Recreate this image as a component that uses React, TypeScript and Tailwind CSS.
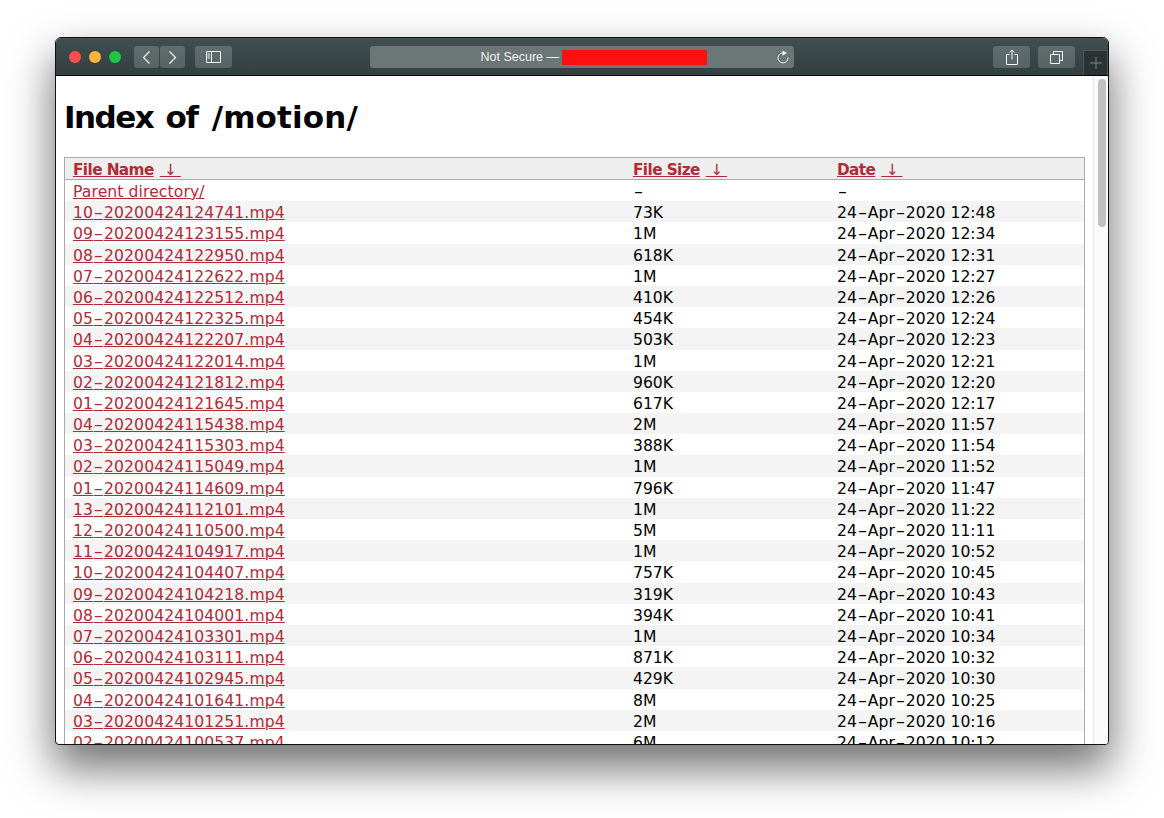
const rows: [string, string, string][] = [
  ["Parent directory/", "-", "-"],
  ["10-20200424124741.mp4", "73K", "24-Apr-2020 12:48"],
  ["09-20200424123155.mp4", "1M", "24-Apr-2020 12:34"],
  ["08-20200424122950.mp4", "618K", "24-Apr-2020 12:31"],
  ["07-20200424122622.mp4", "1M", "24-Apr-2020 12:27"],
  ["06-20200424122512.mp4", "410K", "24-Apr-2020 12:26"],
  ["05-20200424122325.mp4", "454K", "24-Apr-2020 12:24"],
  ["04-20200424122207.mp4", "503K", "24-Apr-2020 12:23"],
  ["03-20200424122014.mp4", "1M", "24-Apr-2020 12:21"],
  ["02-20200424121812.mp4", "960K", "24-Apr-2020 12:20"],
  ["01-20200424121645.mp4", "617K", "24-Apr-2020 12:17"],
  ["04-20200424115438.mp4", "2M", "24-Apr-2020 11:57"],
  ["03-20200424115303.mp4", "388K", "24-Apr-2020 11:54"],
  ["02-20200424115049.mp4", "1M", "24-Apr-2020 11:52"],
  ["01-20200424114609.mp4", "796K", "24-Apr-2020 11:47"],
  ["13-20200424112101.mp4", "1M", "24-Apr-2020 11:22"],
  ["12-20200424110500.mp4", "5M", "24-Apr-2020 11:11"],
  ["11-20200424104917.mp4", "1M", "24-Apr-2020 10:52"],
  ["10-20200424104407.mp4", "757K", "24-Apr-2020 10:45"],
  ["09-20200424104218.mp4", "319K", "24-Apr-2020 10:43"],
  ["08-20200424104001.mp4", "394K", "24-Apr-2020 10:41"],
  ["07-20200424103301.mp4", "1M", "24-Apr-2020 10:34"],
  ["06-20200424103111.mp4", "871K", "24-Apr-2020 10:32"],
  ["05-20200424102945.mp4", "429K", "24-Apr-2020 10:30"],
  ["04-20200424101641.mp4", "8M", "24-Apr-2020 10:25"],
  ["03-20200424101251.mp4", "2M", "24-Apr-2020 10:16"],
  ["02-20200424100537.mp4", "6M", "24-Apr-2020 10:12"],
];

const btn = "flex items-center justify-center h-[22px] rounded-[3px] bg-gradient-to-b from-[#5f6d6e] to-[#566465] text-[#f4f6f6]";
const link = "text-[#b02a37] underline";

function Wide({ text, under }: { text: string; under?: boolean }) {
  const parts = text.split("-");
  return (
    <>
      {parts.map((p, i) => (
        <span key={i}>
          {i > 0 && (
            <span className={`inline-block w-[11px] scale-x-[1.7] text-center ${under ? "underline" : ""}`}>-</span>
          )}
          {p}
        </span>
      ))}
    </>
  );
}

function Sort({ name }: { name: string }) {
  return (
    <>
      <a className={`${link} font-bold text-[15.3px] tracking-[-0.6px]`}>{name}</a>
      <a className={`${link} ml-[6px] whitespace-pre tracking-[-0.6px]`}>{" ↓ "}</a>
    </>
  );
}

export default function App() {
  return (
    <div className="h-[818px] w-[1164px] overflow-hidden bg-white pt-[37px] pl-[55px] font-['DejaVu_Sans',sans-serif]">
      <div className="flex h-[708px] w-[1054px] flex-col overflow-hidden rounded-t-[6px] rounded-b-[4px] border border-[#111] bg-white shadow-[0_22px_44px_2px_rgba(0,0,0,0.55)]">
        <div className="flex h-[38px] shrink-0 items-start border-b border-black bg-gradient-to-b from-[#414f50] to-[#333f40] pt-[8px] pl-[13px]">
          <div className="flex h-[22px] items-center gap-2">
            <span className="size-3 rounded-full bg-[#fc5050]" />
            <span className="size-3 rounded-full bg-[#fdb53a]" />
            <span className="size-3 rounded-full bg-[#1cc843]" />
          </div>
          <div className="ml-[13px] flex gap-[1px]">
            <div className={`${btn} w-[25px]`}>
              <svg width="9" height="13" viewBox="0 0 9 13" fill="none" stroke="currentColor" strokeWidth="1.2"><path d="M7.500.5 1.500 6.500l6 6" /></svg>
            </div>
            <div className={`${btn} w-[25px]`}>
              <svg width="9" height="13" viewBox="0 0 9 13" fill="none" stroke="currentColor" strokeWidth="1.2"><path d="m1.500.5 6 6-6 6" /></svg>
            </div>
          </div>
          <div className={`${btn} ml-[10px] w-[37px]`}>
            <svg width="15" height="12" viewBox="0 0 15 12" fill="none" stroke="currentColor"><path d="M.5.5h14v11H.5zM5.500.5v11" /><path d="M1.500 3h2.500M1.500 5h2.500M1.500 7h2.500" /></svg>
          </div>
          <div className="ml-[138px] flex h-[22px] w-[424px] items-center rounded-[3px] bg-[#6c7677] text-[12.5px] text-[#f0f2f2] font-['Liberation_Sans',sans-serif]">
            <div className="flex flex-1 items-center justify-center pl-[42px]">
              <span>Not Secure —&nbsp;</span>
              <span className="h-[15px] w-[145px] bg-[#ff1010]" />
            </div>
            <svg className="mr-[5px]" width="13" height="14" viewBox="0 0 13 14" fill="none" stroke="currentColor"><path d="M8 3a5 5 0 1 0 4 4.500" /><path d="M6.500.5 11 3 6.500 5.800z" fill="currentColor" stroke="none" /></svg>
          </div>
          <div className={`${btn} ml-[199px] w-[37px]`}>
            <svg width="12" height="16" viewBox="0 0 12 16" fill="none" stroke="currentColor"><path d="M3.500 5.500H.5v10h11v-10h-3M6 10.500V1M3.500 3.500 6 1l2.500 2.500" /></svg>
          </div>
          <div className={`${btn} ml-[8px] w-[37px]`}>
            <svg width="13" height="13" viewBox="0 0 13 13" fill="none" stroke="currentColor"><path d="M.5 3.500h9v9h-9zM3.500 3.500v-3h9v9h-3" /></svg>
          </div>
          <div className="ml-[8px] mt-[4px] flex h-[25px] w-[25px] items-center justify-center border border-b-0 border-[#4a5657] bg-[#2a3233] text-[#7e8889]">
            <svg width="12" height="12" viewBox="0 0 12 12" stroke="currentColor" fill="none"><path d="M6 0v12M0 6h12" /></svg>
          </div>
        </div>
        <div className="flex min-h-0 flex-1">
          <div className="min-w-0 flex-1 overflow-hidden pl-[8px] pr-[8px] text-[15.6px] leading-[21.2px] text-black">
            <h1 className="mt-[21px] mb-[20px] text-[31px] leading-[40px] font-bold whitespace-pre [word-spacing:3px]">
              <span className="tracking-[-1.5px]">Index of </span>
              <span className="ml-[2px] tracking-[0.15px]">/motion/</span>
            </h1>
            <div className="border border-[#aaa]">
              <div className="flex h-[22px] border-b border-[#aaa] bg-[#eee] pl-[8px] pt-[2px]">
                <div className="w-[560px]"><Sort name="File Name" /></div>
                <div className="w-[204px]"><Sort name="File Size" /></div>
                <div className="flex-1"><Sort name="Date" /></div>
              </div>
              {rows.map((r, i) => (
                <div key={r[0]} className={`flex h-[21.2px] pl-[8px] pt-[2px] ${i % 2 ? "bg-[#f4f4f4]" : "bg-white"}`}>
                  <div className="w-[560px] tracking-[0.1px]"><a className={link}><Wide text={r[0]} under /></a></div>
                  <div className="w-[204px]"><Wide text={r[1]} /></div>
                  <div className="flex-1"><Wide text={r[2]} /></div>
                </div>
              ))}
            </div>
          </div>
          <div className="flex w-[15px] shrink-0 justify-center border-l border-[#e8e8e8] bg-[#fafafa] pt-[3px] pl-[2px]">
            <div className="h-[148px] w-[8px] rounded-full bg-[#c1c1c1]" />
          </div>
        </div>
      </div>
    </div>
  );
}
